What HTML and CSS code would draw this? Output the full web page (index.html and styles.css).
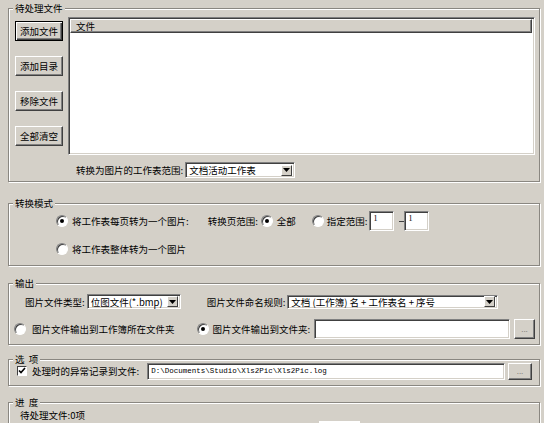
FILE: index.html
```html
<!DOCTYPE html>
<html>
<head>
    <title>Xls2Pic</title>
    <meta charset="utf-8">
    <link rel="stylesheet" href="styles.css">
</head>
<body>
    <fieldset class="group group-files">
        <legend>待处理文件</legend>
        <div class="files-body">
            <div class="btn-col">
                <button class="btn btn-focus">添加文件</button>
                <button class="btn">添加目录</button>
                <button class="btn">移除文件</button>
                <button class="btn">全部清空</button>
            </div>
            <div class="listbox">
                <div class="list-head">文件</div>
            </div>
        </div>
        <div class="sheet-row">
            <span>转换为图片的工作表范围:</span>
            <div class="combo combo-sheet">
                <span class="combo-text">文档活动工作表</span>
                <span class="combo-arrow"><svg width="7" height="4" viewBox="0 0 7 4"><path d="M0 0h7L3.5 4z" fill="#000"/></svg></span>
            </div>
        </div>
    </fieldset>

    <fieldset class="group group-mode">
        <legend>转换模式</legend>
        <div class="mode-row">
            <span class="radio on"></span>
            <span class="lbl-after">将工作表每页转为一个图片:</span>
            <span class="range-title">转换页范围:</span>
            <span class="radio on radio-all"></span>
            <span class="lbl-after">全部</span>
            <span class="radio radio-range"></span>
            <span class="lbl-range">指定范围:</span>
            <div class="field page-from">1</div>
            <span class="dash"></span>
            <div class="field page-to">1</div>
        </div>
        <div class="mode-row mode-row2">
            <span class="radio"></span>
            <span class="lbl-after">将工作表整体转为一个图片</span>
        </div>
    </fieldset>

    <fieldset class="group group-out">
        <legend>输出</legend>
        <div class="out-row">
            <span>图片文件类型:</span>
            <div class="combo combo-type">
                <span class="combo-text">位图文件(*.bmp)</span>
                <span class="combo-arrow"><svg width="7" height="4" viewBox="0 0 7 4"><path d="M0 0h7L3.5 4z" fill="#000"/></svg></span>
            </div>
            <span class="name-title">图片文件命名规则:</span>
            <div class="combo combo-name">
                <span class="combo-text">文档 (工作簿) 名 + 工作表名 + 序号</span>
                <span class="combo-arrow"><svg width="7" height="4" viewBox="0 0 7 4"><path d="M0 0h7L3.5 4z" fill="#000"/></svg></span>
            </div>
        </div>
        <div class="out-row out-row2">
            <span class="radio"></span>
            <span class="lbl-out">图片文件输出到工作簿所在文件夹</span>
            <span class="radio on radio-folder"></span>
            <span class="lbl-folder">图片文件输出到文件夹:</span>
            <div class="field folder-field"></div>
            <button class="btn btn-dots">...</button>
        </div>
    </fieldset>

    <fieldset class="group group-opt">
        <legend>选&nbsp;&nbsp;项</legend>
        <div class="opt-row">
            <span class="check"><svg width="8" height="8" viewBox="0 0 8 8"><path d="M1 3.5l2 2 4-4.5" fill="none" stroke="#000" stroke-width="1.6"/></svg></span>
            <span class="lbl-check">处理时的异常记录到文件:</span>
            <div class="field log-field">D:\Documents\Studio\Xls2Pic\Xls2Pic.log</div>
            <button class="btn btn-dots btn-dots-log">...</button>
        </div>
    </fieldset>

    <fieldset class="group group-progress">
        <legend>进&nbsp;&nbsp;度</legend>
        <div class="progress-row">待处理文件:0项</div>
        <div class="progress-box"></div>
    </fieldset>
</body>
</html>
```

FILE: styles.css
```css
* {
    box-sizing: border-box;
}

body {
    margin: 0;
    padding: 2px 4px 0 8px;
    background: #d4d0c8;
    color: #000;
    font-family: "Noto Sans CJK SC", sans-serif;
    font-size: 9.5px;
    line-height: 12px;
    overflow: hidden;
}

/* group boxes */
.group {
    margin: 0;
    padding: 0;
    min-inline-size: 0;
    border: 1px solid #8a8781;
    box-shadow: inset 1px 1px 0 #fff, 1px 1px 0 #fff;
}

.group legend {
    margin-left: 4px;
    padding: 0 2px;
    line-height: 12px;
    background: #d4d0c8;
}

.group-mode { margin-top: 15px; padding-bottom: 8px; }
.group-out { margin-top: 11px; padding-bottom: 5px; }
.group-opt { margin-top: 8px; padding-bottom: 5px; }
.group-progress { margin-top: 10px; height: 40px; }

/* buttons */
.btn {
    font-family: inherit;
    font-size: 9.5px;
    color: #000;
    background: #d4d0c8;
    border: 1px solid;
    border-color: #fff #404040 #404040 #fff;
    box-shadow: inset -1px -1px 0 #808080;
    padding: 0;
    margin: 0;
}

.btn-focus {
    border: 1px solid #000;
    box-shadow: inset 1px 1px 0 #fff, inset -1px -1px 0 #404040, inset -2px -2px 0 #808080;
}

.btn-dots {
    width: 21px;
    height: 20px;
    margin-left: 4px;
    color: #8a8781;
    font-size: 8px;
    line-height: 8px;
}

.btn-dots-log {
    width: 24px;
    height: 17px;
    margin-left: 3px;
}

/* sunken white fields */
.field, .listbox, .combo {
    background: #fff;
    border: 1px solid;
    border-color: #808080 #fff #fff #808080;
    box-shadow: inset 1px 1px 0 #404040, inset -1px -1px 0 #d4d0c8;
}

/* files group */
.files-body {
    display: flex;
    margin-top: 3px;
    padding: 0 4px 0 6px;
}

.btn-col {
    display: flex;
    flex-direction: column;
    gap: 15px;
    padding-top: 4px;
}

.btn-col .btn {
    width: 48px;
    height: 20px;
}

.listbox {
    flex: 1;
    height: 138px;
    margin-left: 5px;
    padding: 1px 2px 0 1px;
}

.list-head {
    height: 14px;
    padding-left: 5px;
    line-height: 12px;
    background: #d4d0c8;
    border: 1px solid;
    border-color: #fff #404040 #404040 #fff;
    box-shadow: inset -1px -1px 0 #808080;
}

.sheet-row {
    display: flex;
    align-items: center;
    height: 16px;
    margin: 7px 0 3px;
    padding-left: 67px;
}

/* combo boxes */
.combo {
    display: flex;
    align-items: center;
    justify-content: space-between;
    padding: 2px 2px 2px 3px;
}

.combo-text {
    white-space: nowrap;
}

.combo-arrow {
    display: flex;
    align-items: center;
    justify-content: center;
    width: 11px;
    height: 11px;
    background: #d4d0c8;
    border: 1px solid;
    border-color: #fff #404040 #404040 #fff;
}

.combo-sheet {
    width: 110px;
    height: 16px;
    margin-left: 2px;
}

.combo-type {
    width: 94px;
    height: 15px;
    margin-left: 2px;
}

.combo-name {
    width: 211px;
    height: 14px;
    margin-left: 2px;
}

/* radios and checks */
.radio {
    position: relative;
    flex: none;
    width: 12px;
    height: 12px;
    border-radius: 50%;
    background: #fff;
    border: 1px solid;
    border-color: #808080 #fff #fff #808080;
    box-shadow: inset 1px 1px 0 #404040;
}

.radio.on::after {
    content: "";
    position: absolute;
    left: 3px;
    top: 3px;
    width: 4px;
    height: 4px;
    border-radius: 50%;
    background: #000;
}

.check {
    display: flex;
    align-items: center;
    justify-content: center;
    width: 10px;
    height: 10px;
    background: #fff;
    border: 1px solid;
    border-color: #404040 #fff #fff #404040;
}

/* mode group */
.mode-row {
    display: flex;
    align-items: center;
    height: 20px;
    margin-top: 2px;
    padding-left: 47px;
}

.mode-row2 {
    height: 16px;
    margin-top: 10px;
}

.lbl-after { margin-left: 4px; }
.range-title { margin-left: 19px; }
.radio-all { margin-left: 3px; }
.radio-range { margin-left: 16px; }
.lbl-range { margin-left: 3px; }

.field {
    font-family: "Liberation Serif", serif;
    font-size: 8px;
    line-height: 10px;
    padding: 2px 3px;
    white-space: nowrap;
}

.page-from, .page-to {
    width: 25px;
    height: 20px;
}

.page-from { margin-left: 2px; }

.dash {
    width: 5px;
    height: 1px;
    margin-left: 5px;
    background: #404040;
}

/* output group */
.out-row {
    display: flex;
    align-items: center;
    height: 15px;
    margin-top: 5px;
    padding-left: 16px;
}

.out-row2 {
    height: 20px;
    margin-top: 10px;
    padding: 0 4px 0 5px;
}

.name-title { margin-left: 26px; }
.lbl-out { margin-left: 6px; }
.radio-folder { margin-left: 22px; }
.lbl-folder { margin-left: 4px; }

.folder-field {
    flex: 1;
    height: 20px;
    margin-left: 4px;
}

/* options group */
.opt-row {
    display: flex;
    align-items: center;
    height: 18px;
    margin-top: -3px;
    padding: 0 7px 0 8px;
}

.lbl-check { margin-left: 5px; }

.log-field {
    flex: 1;
    height: 17px;
    margin-left: 8px;
    font-family: "Liberation Mono", monospace;
    font-size: 7.5px;
    line-height: 11px;
    padding: 2px 3px;
}

/* progress group */
.progress-row {
    margin-top: 1px;
    padding-left: 11px;
}

.progress-box {
    width: 41px;
    height: 10px;
    margin-left: 310px;
    background: #fff;
}
```
